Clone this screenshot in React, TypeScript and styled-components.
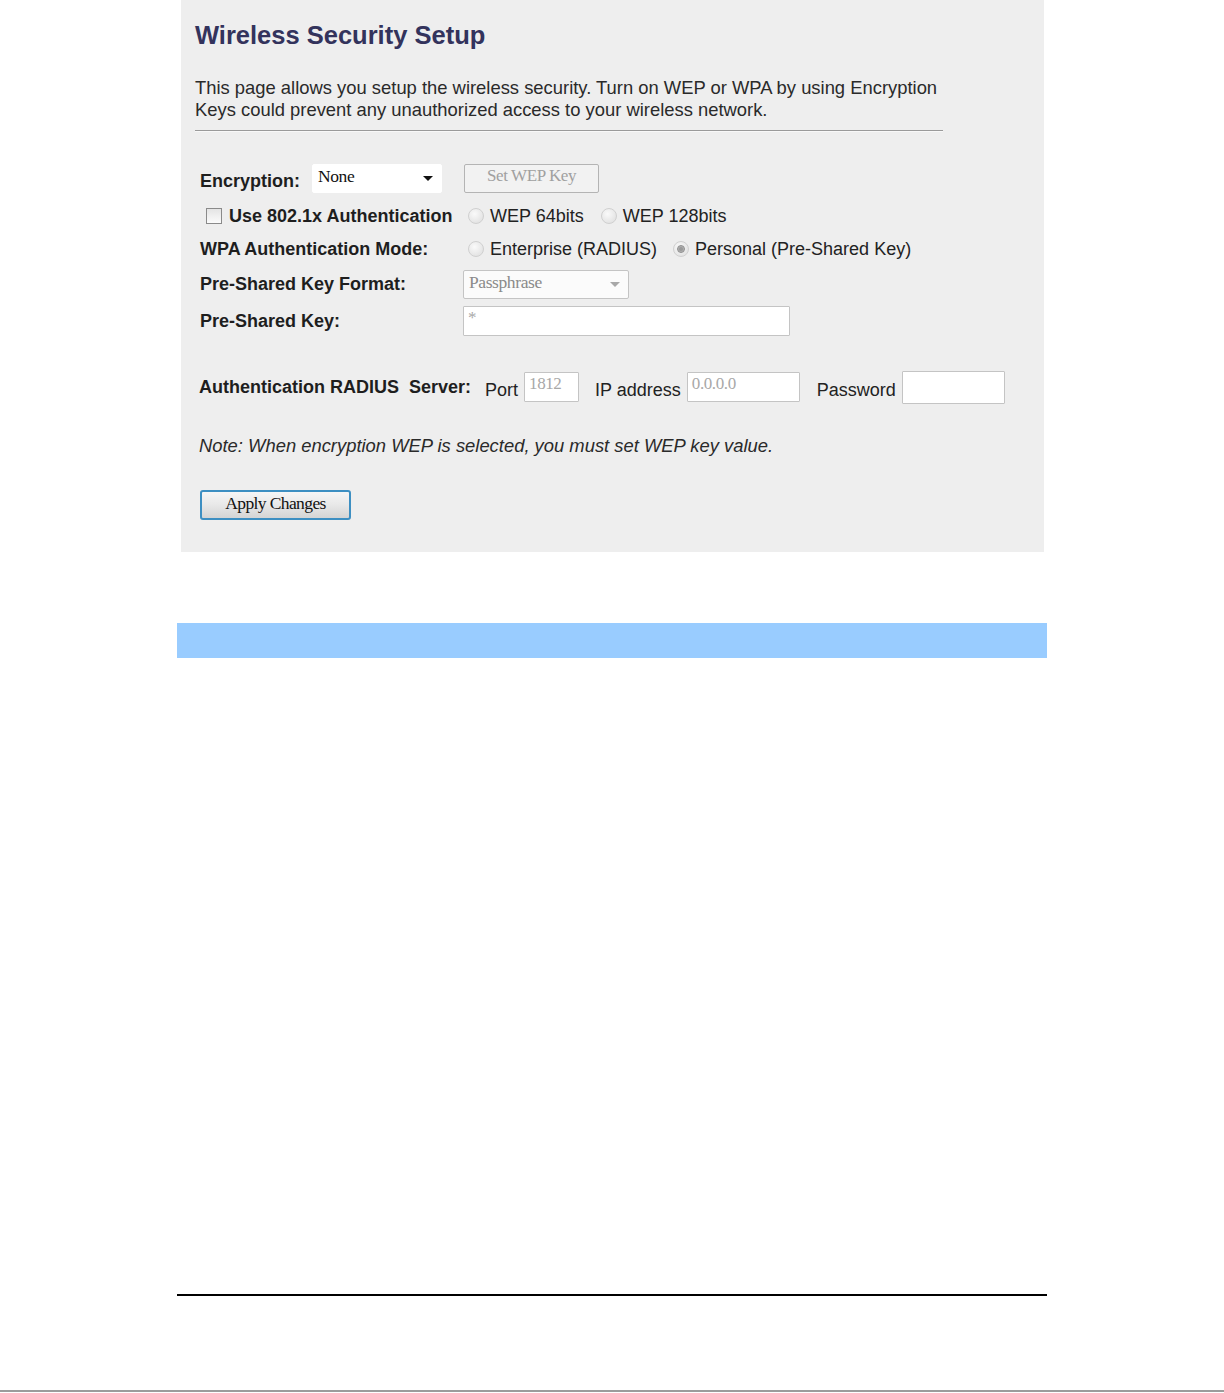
import styled, { createGlobalStyle } from 'styled-components';

const GlobalStyle = createGlobalStyle`
  body {
    margin: 0;
    background: #ffffff;
    font-family: 'Liberation Sans', Arial, sans-serif;
  }
`;

const Page = styled.div`
  width: 1224px;
  height: 1393px;
  display: flex;
  flex-direction: column;
`;

const Panel = styled.div`
  margin-left: 181px;
  width: 863px;
  height: 552px;
  box-sizing: border-box;
  padding: 20px 0 0 14px;
  background: #eeeeee;
  color: #222;
`;

const Title = styled.h1`
  margin: 0;
  font-size: 25.5px;
  line-height: 30px;
  font-weight: bold;
  color: #33335c;
`;

const Intro = styled.p`
  margin: 27px 0 0;
  width: 760px;
  font-size: 18.4px;
  line-height: 22px;
  color: #2a2a2a;
`;

const Rule = styled.div`
  margin-top: 9px;
  width: 748px;
  height: 1px;
  background: #9a9a9a;
  border-bottom: 1px solid #f8f8f8;
`;

const Form = styled.div`
  margin: 27px 0 0 5px;
  display: grid;
  grid-template-columns: 263px auto;
  grid-template-rows: 38px 38px 28px 42px 32px;
  align-items: center;
`;

const Cell = styled.div<{ $indent?: number }>`
  display: flex;
  align-items: center;
  padding-left: ${(p) => p.$indent || 0}px;
  font-size: 18px;
  white-space: nowrap;
`;

const Label = styled.span<{ $drop?: number }>`
  font-weight: bold;
  font-size: 18px;
  color: #1e1e1e;
  margin-top: ${(p) => p.$drop || 0}px;
`;

const Option = styled.span<{ $gap?: number }>`
  font-size: 18px;
  color: #222;
  margin-left: 6px;
  margin-right: ${(p) => p.$gap || 0}px;
`;

const Radio = styled.span<{ $checked?: boolean }>`
  width: 14px;
  height: 14px;
  border-radius: 50%;
  border: 1px solid #d0d0d0;
  background: radial-gradient(circle at 40% 35%, #fafafa, #dcdcdc);
  display: inline-flex;
  align-items: center;
  justify-content: center;
  &::after {
    content: '';
    display: ${(p) => (p.$checked ? 'block' : 'none')};
    width: 8px;
    height: 8px;
    box-sizing: border-box;
    border-radius: 50%;
    border: 1px solid #8c8c8c;
    background: radial-gradient(circle, #9a9a9a 35%, #d6d6d6 100%);
  }
`;

const Check = styled.span`
  width: 14px;
  height: 14px;
  border: 1px solid #8a8a8a;
  background: linear-gradient(#e4e4e4, #fbfbfb);
  margin: 0 7px 0 6px;
`;

const Select = styled.div<{ $w: number; $disabled?: boolean }>`
  width: ${(p) => p.$w}px;
  height: 29px;
  box-sizing: border-box;
  display: flex;
  align-items: center;
  justify-content: space-between;
  padding: 0 8px 4px 5px;
  background: ${(p) => (p.$disabled ? '#fbfbfb' : '#ffffff')};
  border: 1px solid ${(p) => (p.$disabled ? '#c4c4c4' : '#ffffff')};
  border-radius: 2px;
  font-family: 'Liberation Serif', 'Times New Roman', serif;
  font-size: 17.5px;
  letter-spacing: -0.4px;
  color: ${(p) => (p.$disabled ? '#8a8a8a' : '#111')};
  margin-left: ${(p) => (p.$disabled ? 0 : 12)}px;
`;

const Caret = styled.span<{ $light?: boolean }>`
  width: 0;
  height: 0;
  margin-top: 4px;
  border-left: 5px solid transparent;
  border-right: 5px solid transparent;
  border-top: 5px solid ${(p) => (p.$light ? '#a8a8a8' : '#111')};
`;

const GhostButton = styled.div`
  width: 135px;
  height: 29px;
  box-sizing: border-box;
  display: flex;
  align-items: center;
  justify-content: center;
  padding-bottom: 4px;
  border: 1px solid #b4b4b4;
  border-radius: 2px;
  background: #f2f2f2;
  font-family: 'Liberation Serif', 'Times New Roman', serif;
  font-size: 17px;
  letter-spacing: -0.4px;
  color: #a0a0a0;
`;

const TextBox = styled.div<{ $w: number; $h?: number }>`
  width: ${(p) => p.$w}px;
  height: ${(p) => p.$h || 30}px;
  box-sizing: border-box;
  padding: 1px 4px 0;
  background: #ffffff;
  border: 1px solid #c4c4c4;
  border-radius: 1px;
  font-family: 'Liberation Serif', 'Times New Roman', serif;
  font-size: 17px;
  line-height: 20px;
  letter-spacing: -0.4px;
  color: #a8a8a8;
`;

const ServerRow = styled.div`
  margin: 34px 0 0 4px;
  height: 32px;
  display: flex;
  align-items: center;
  white-space: nowrap;
`;

const FieldText = styled.span<{ $left: number }>`
  font-size: 18px;
  color: #222;
  margin: 6px 6px 0 ${(p) => p.$left}px;
`;

const Note = styled.p`
  margin: 32px 0 0 4px;
  font-size: 18.4px;
  line-height: 22px;
  font-style: italic;
  color: #2a2a2a;
`;

const ApplyButton = styled.div`
  margin: 33px 0 0 5px;
  width: 151px;
  height: 30px;
  box-sizing: border-box;
  display: flex;
  align-items: center;
  justify-content: center;
  padding-bottom: 4px;
  border: 2px solid #3d8fc2;
  border-radius: 3px;
  background: linear-gradient(#f6f6f6 0%, #e8e8e8 50%, #d4d4d4 100%);
  font-family: 'Liberation Serif', 'Times New Roman', serif;
  font-size: 17.5px;
  letter-spacing: -0.6px;
  color: #111;
`;

const BlueBar = styled.div`
  margin: 71px 0 0 177px;
  width: 870px;
  height: 35px;
  background: #99ccff;
`;

const FootRule = styled.div`
  margin: 636px 0 0 177px;
  width: 870px;
  height: 1.5px;
  background: #000;
`;

const PageEdge = styled.div`
  margin-top: auto;
  margin-bottom: 1px;
  width: 100%;
  height: 2px;
  background: #9c9c9c;
`;

export default function App() {
  return (
    <Page>
      <GlobalStyle />
      <Panel>
        <Title>Wireless Security Setup</Title>
        <Intro>
          This page allows you setup the wireless security. Turn on WEP or WPA by using Encryption
          Keys could prevent any unauthorized access to your wireless network.
        </Intro>
        <Rule />
        <Form>
          <Cell>
            <Label $drop={6}>Encryption:</Label>
            <Select $w={130}>
              None
              <Caret />
            </Select>
          </Cell>
          <Cell $indent={1}>
            <GhostButton>Set WEP Key</GhostButton>
          </Cell>

          <Cell>
            <Check />
            <Label>Use 802.1x Authentication</Label>
          </Cell>
          <Cell $indent={5}>
            <Radio />
            <Option $gap={17}>WEP 64bits</Option>
            <Radio />
            <Option>WEP 128bits</Option>
          </Cell>

          <Cell>
            <Label>WPA Authentication Mode:</Label>
          </Cell>
          <Cell $indent={5}>
            <Radio />
            <Option $gap={16}>Enterprise (RADIUS)</Option>
            <Radio $checked />
            <Option>Personal (Pre-Shared Key)</Option>
          </Cell>

          <Cell>
            <Label>Pre-Shared Key Format:</Label>
          </Cell>
          <Cell>
            <Select $w={166} $disabled>
              Passphrase
              <Caret $light />
            </Select>
          </Cell>

          <Cell>
            <Label>Pre-Shared Key:</Label>
          </Cell>
          <Cell>
            <TextBox $w={327}>*</TextBox>
          </Cell>
        </Form>

        <ServerRow>
          <Label>Authentication RADIUS&nbsp; Server:</Label>
          <FieldText $left={14}>Port</FieldText>
          <TextBox $w={55}>1812</TextBox>
          <FieldText $left={16}>IP address</FieldText>
          <TextBox $w={113}>0.0.0.0</TextBox>
          <FieldText $left={17}>Password</FieldText>
          <TextBox $w={103} $h={33} />
        </ServerRow>

        <Note>Note: When encryption WEP is selected, you must set WEP key value.</Note>

        <ApplyButton>Apply Changes</ApplyButton>
      </Panel>

      <BlueBar />
      <FootRule />
      <PageEdge />
    </Page>
  );
}
